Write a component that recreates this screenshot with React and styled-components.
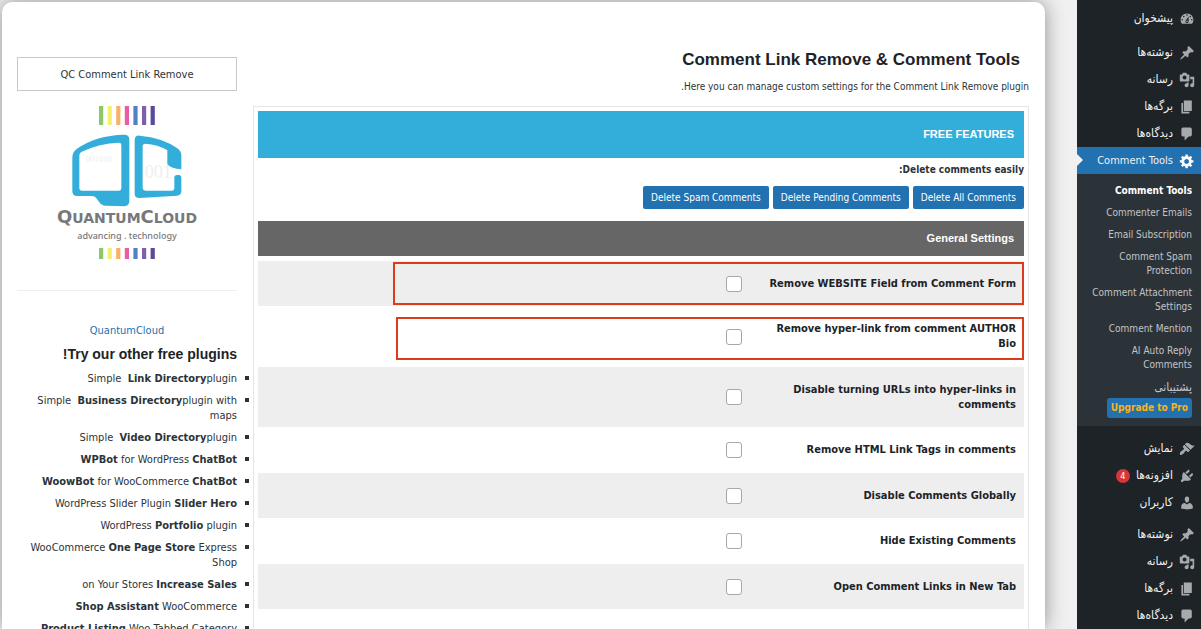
import React from "react";
import styled, { createGlobalStyle } from "styled-components";

const GlobalStyle = createGlobalStyle`
  * {
    box-sizing: border-box;
  }

  body {
    margin: 0;
    background: #f0f0f1;
    color: #2c3338;
    font-family: "DejaVu Sans Condensed", "Noto Sans", sans-serif;
    font-size: 11px;
    line-height: 15px;
  }
`;

const Page = styled.div`
  display: flex;
  height: 100vh;
  overflow: hidden;
`;

/* admin menu */

const Menu = styled.nav`
  flex: 0 0 124px;
  padding-top: 5px;
  background: #1d2327;
`;

const MenuList = styled.ul`
  list-style: none;
  margin: 0;
  padding: 0;
`;

const MenuItem = styled.li`
  margin-top: ${props => props.$gap || 0}px;
`;

const MenuLink = styled.a`
  position: relative;
  display: flex;
  align-items: center;
  gap: 6px;
  height: 27px;
  padding-right: 6px;
  background: ${props => (props.$current ? "#2271b1" : "transparent")};
  color: #f0f0f1;
  font-size: ${props => (props.$current ? 11 : 12)}px;
  text-decoration: none;
  white-space: nowrap;

  &::after {
    content: "";
    display: ${props => (props.$current ? "block" : "none")};
    position: absolute;
    left: 0;
    top: 7px;
    border: 6px solid transparent;
    border-left-color: #f0f0f1;
    border-right: 0;
  }
`;

const MenuIcon = styled.svg`
  flex: none;
  width: 16px;
  height: 16px;
  fill: ${props => (props.$current ? "#fff" : "#a7aaad")};
`;

const Count = styled.span`
  width: 14px;
  height: 14px;
  border-radius: 7px;
  background: #d63638;
  color: #fff;
  font-size: 9px;
  line-height: 14px;
  text-align: center;
`;

const SubMenu = styled.ul`
  list-style: none;
  margin: 0;
  padding: 6px 0 8px;
  background: #2c3338;
`;

const SubLink = styled.a`
  display: block;
  padding: 4px 9px 4px 14px;
  color: ${props => (props.$current ? "#fff" : "#c3c4c7")};
  font-weight: ${props => (props.$current ? "bold" : "normal")};
  font-size: 10px;
  line-height: 14px;
  text-decoration: none;

  &:lang(fa) {
    font-size: 12px;
  }
`;

const Upgrade = styled.a`
  display: block;
  width: fit-content;
  margin-right: 9px;
  padding: 3px 4px;
  border-radius: 3px;
  background: #2271b1;
  color: #fcb214;
  font-size: 10px;
  font-weight: bold;
  line-height: 14px;
  text-decoration: none;
  white-space: nowrap;
`;

/* content card */

const Card = styled.div`
  flex: 1;
  display: flex;
  align-items: flex-start;
  gap: 16px;
  min-width: 0;
  margin: 2px 32px 0 2px;
  padding: 46px 16px 40px 15px;
  border-radius: 10px 10px 0 0;
  background: #fff;
  box-shadow: 0 0 20px rgba(0, 0, 0, 0.4);
`;

const Main = styled.main`
  flex: 1;
  min-width: 0;
`;

const Title = styled.h1`
  margin: 0 9px 6px 0;
  color: #1d2327;
  font-family: "Liberation Sans", Arial, sans-serif;
  font-size: 17px;
  line-height: 24px;
`;

const Intro = styled.p`
  margin: 0 0 11px;
  font-size: 10px;
  line-height: 17px;
`;

const Settings = styled.section`
  padding: 4px;
  border: 1px solid #e5e5e5;
  min-height: 600px;
`;

const Banner = styled.h2`
  margin: 0;
  padding: 0 10px;
  background: ${props => (props.$dark ? "#666" : "#33aeda")};
  color: #fff;
  font-family: "Liberation Sans", Arial, sans-serif;
  font-size: 11px;
  line-height: ${props => (props.$dark ? 35 : 47)}px;
`;

const Label = styled.p`
  margin: 4px 0 8px;
  font-size: 10px;
  font-weight: bold;
  line-height: 16px;
`;

const Actions = styled.div`
  display: flex;
  gap: 4px;
  margin-bottom: 12px;
`;

const Button = styled.button`
  height: 23px;
  padding: 0 8px;
  border: 0;
  border-radius: 2px;
  background: #2271b1;
  color: #fff;
  font-family: inherit;
  font-size: 10px;
`;

const Table = styled.table`
  width: 100%;
  margin-top: 5px;
  border-collapse: collapse;
`;

const Head = styled.th`
  width: 272px;
  padding: 15px 8px 15px 10px;
  color: #1d2327;
  text-align: right;
`;

const Row = styled.tr`
  position: relative;
  background: #fff;

  &:nth-child(odd) {
    background: #eee;
  }

  &:nth-child(even) ${Head} {
    padding-bottom: 16px;
  }

  &::after {
    content: "";
    display: ${props => (props.$marked ? "block" : "none")};
    position: absolute;
    top: ${props => (props.$marked === "inner" ? 11 : 1)}px;
    right: 0;
    bottom: ${props => (props.$marked === "inner" ? 7 : 1)}px;
    left: ${props => (props.$marked === "inner" ? 138 : 135)}px;
    border: 2px solid #dd3c1c;
    pointer-events: none;
  }
`;

const Cell = styled.td`
  padding: 0 10px;
`;

const Checkbox = styled.input.attrs({ type: "checkbox" })`
  appearance: none;
  display: block;
  width: 16px;
  height: 16px;
  margin: 0;
  border: 1px solid #a5a7aa;
  border-radius: 3px;
  background: #fff;
`;

/* promo column */

const Aside = styled.aside`
  flex: 0 0 220px;
  padding-top: 9px;
`;

const PluginName = styled.div`
  height: 34px;
  border: 1px solid #c8c9cc;
  line-height: 34px;
  text-align: center;
`;

const Brand = styled.div`
  display: flex;
  flex-direction: column;
  align-items: center;
  height: 200px;
  padding-top: 15px;
  border-bottom: 1px solid #eee;
`;

const BrandName = styled.div`
  color: #77787b;
  font-family: "DejaVu Sans", sans-serif;
  font-size: 14px;
  font-weight: bold;
  line-height: 20px;
  white-space: nowrap;

  span {
    font-size: 18px;
  }
`;

const Slogan = styled.div`
  margin-bottom: 4px;
  color: #77787b;
  font-family: "Noto Sans", sans-serif;
  font-size: 9px;
  font-weight: 500;
  line-height: 16px;
`;

const BrandLink = styled.a`
  display: block;
  margin: 32px 0 7px;
  color: #2271b1;
  line-height: 16px;
  text-align: center;
  text-decoration: none;
`;

const Subtitle = styled.h3`
  margin: 0 0 9px;
  color: #1d2327;
  font-family: "Liberation Sans", Arial, sans-serif;
  font-size: 14px;
  line-height: 16px;
`;

const PluginList = styled.ul`
  margin: 0;
  padding: 0;
  list-style: none;
`;

const Plugin = styled.li`
  position: relative;
  margin-bottom: 7px;

  &::before {
    content: "";
    position: absolute;
    top: 5px;
    right: -12px;
    width: 4px;
    height: 4px;
    background: #2c3338;
  }
`;

const icons = {
  dashboard:
    "M3.76 16h12.48c1.1-1.37 1.76-3.11 1.76-5 0-4.42-3.58-8-8-8s-8 3.58-8 8c0 1.89.66 3.63 1.76 5zM10 4c.55 0 1 .45 1 1s-.45 1-1 1-1-.45-1-1 .45-1 1-1zM6 6c.55 0 1 .45 1 1s-.45 1-1 1-1-.45-1-1 .45-1 1-1zm8 0c.55 0 1 .45 1 1s-.45 1-1 1-1-.45-1-1 .45-1 1-1zm-5.37 5.55L12 7v6c0 1.1-.9 2-2 2s-2-.9-2-2c0-.57.24-1.08.63-1.45zM4 10c.55 0 1 .45 1 1s-.45 1-1 1-1-.45-1-1 .45-1 1-1zm12 0c.55 0 1 .45 1 1s-.45 1-1 1-1-.45-1-1 .45-1 1-1zm-5 3c0-.55-.45-1-1-1s-1 .45-1 1 .45 1 1 1 1-.45 1-1z",
  post:
    "M10.44 3.02l1.82-1.82 6.36 6.35-1.83 1.82c-1.05-.68-2.48-.57-3.41.36l-.75.75c-.92.93-1.04 2.35-.35 3.41l-1.83 1.82-2.41-2.41-2.8 2.79c-.42.42-3.38 2.71-3.8 2.29s1.86-3.39 2.28-3.81l2.79-2.79L4.1 9.36l1.83-1.82c1.05.69 2.48.57 3.4-.36l.75-.75c.93-.92 1.05-2.35.36-3.41z",
  media:
    "M13 11V4c0-.55-.45-1-1-1h-1.67L9 1H5L3.67 3H2c-.55 0-1 .45-1 1v7c0 .55.45 1 1 1h10c.55 0 1-.45 1-1zM7 4.5c1.38 0 2.5 1.12 2.5 2.5S8.38 9.5 7 9.5 4.5 8.38 4.5 7 5.62 4.5 7 4.5zM14 6h5v10.5c0 1.38-1.12 2.5-2.5 2.5S14 17.88 14 16.5s1.12-2.5 2.5-2.5c.17 0 .34.02.5.05V9h-3V6zm-4 8.05V13h2v3.5c0 1.38-1.12 2.5-2.5 2.5S7 17.88 7 16.5 8.12 14 9.5 14c.17 0 .34.02.5.05z",
  page: "M6 15V2h10v13H6zm-1 1h8v2H3V5h2v11z",
  comments:
    "M5 2h9c1.1 0 2 .9 2 2v7c0 1.1-.9 2-2 2h-2l-5 5v-5H5c-1.1 0-2-.9-2-2V4c0-1.1.9-2 2-2z",
  generic:
    "M18 12h-2.18c-.17.7-.44 1.35-.81 1.93l1.54 1.54-2.1 2.1-1.54-1.54c-.58.36-1.23.63-1.91.79V19H8v-2.18c-.68-.16-1.33-.43-1.91-.79l-1.54 1.54-2.12-2.12 1.54-1.54c-.36-.58-.63-1.23-.79-1.91H1V9.03h2.17c.16-.7.44-1.35.8-1.94L2.43 5.55l2.1-2.1 1.54 1.54c.58-.37 1.24-.64 1.93-.81V2h3v2.18c.68.16 1.33.43 1.91.79l1.54-1.54 2.12 2.12-1.54 1.54c.36.59.64 1.24.8 1.94H18V12zm-8.5 1.5c1.66 0 3-1.34 3-3s-1.34-3-3-3-3 1.34-3 3 1.34 3 3 3z",
  appearance:
    "M14.48 11.06L7.41 3.99l1.5-1.5c.5-.56 2.3-.47 3.51.32 1.21.8 1.43 1.28 2.91 2.1 1.18.64 2.45 1.26 4.45.85zm-.71.71L6.7 4.7 4.93 6.47c-.39.39-.39 1.02 0 1.41l1.06 1.06c.39.39.39 1.03 0 1.42-.6.6-1.43 1.11-2.21 1.69-.35.26-.7.53-1.01.84C1.43 14.23.4 16.08 1.4 17.07c.99 1 2.84-.03 4.18-1.36.31-.31.58-.66.85-1.02.57-.78 1.08-1.61 1.69-2.21.39-.39 1.02-.39 1.41 0l1.06 1.06c.39.39 1.02.39 1.41 0z",
  plugins:
    "M13.11 4.36L9.87 7.6 8 5.73l3.24-3.24c.35-.34 1.05-.2 1.56.32.52.51.66 1.21.31 1.55zm-8 1.77l.91-1.12 9.01 9.01-1.19.84c-.71.71-2.63 1.16-3.82 1.16H6.14L4.9 17.26c-.59.59-1.54.59-2.12 0-.59-.58-.59-1.53 0-2.12l1.24-1.24v-3.88c0-1.13.4-3.19 1.09-3.89zm7.26 3.97l3.24-3.24c.34-.35 1.04-.21 1.55.31.52.51.66 1.21.31 1.55l-3.24 3.25z",
  users:
    "M10 9.25c-2.27 0-2.73-3.44-2.73-3.44C7 4.02 7.82 2 9.97 2c2.16 0 2.98 2.02 2.71 3.81 0 0-.41 3.44-2.68 3.44zm0 2.57L12.72 10c2.39 0 4.52 2.33 4.52 4.53v2.49s-3.65 1.13-7.24 1.13c-3.65 0-7.24-1.13-7.24-1.13v-2.49c0-2.25 1.94-4.48 4.47-4.48z"
};

const submenu = [
  { text: "Commenter Emails" },
  { text: "Email Subscription" },
  { text: "Comment Spam Protection" },
  { text: "Comment Attachment Settings" },
  { text: "Comment Mention" },
  { text: "AI Auto Reply Comments" },
  { text: "پشتیبانی", lang: "fa" }
];

const menu = [
  { icon: "dashboard", text: "پیشخوان" },
  { icon: "post", text: "نوشته‌ها", gap: 7 },
  { icon: "media", text: "رسانه" },
  { icon: "page", text: "برگه‌ها" },
  { icon: "comments", text: "دیدگاه‌ها" },
  { icon: "generic", text: "Comment Tools", current: true, open: true },
  { icon: "appearance", text: "نمایش", gap: 9 },
  { icon: "plugins", text: "افزونه‌ها", count: 4 },
  { icon: "users", text: "کاربران" },
  { icon: "post", text: "نوشته‌ها", gap: 5 },
  { icon: "media", text: "رسانه" },
  { icon: "page", text: "برگه‌ها" },
  { icon: "comments", text: "دیدگاه‌ها" },
  { icon: "generic", text: "", current: true }
];

const options = [
  { text: "Remove WEBSITE Field from Comment Form", marked: "full" },
  { text: "Remove hyper-link from comment AUTHOR Bio", marked: "inner" },
  { text: "Disable turning URLs into hyper-links in comments" },
  { text: "Remove HTML Link Tags in comments" },
  { text: "Disable Comments Globally" },
  { text: "Hide Existing Comments" },
  { text: "Open Comment Links in New Tab" }
];

const barColors = [
  "#8cc768",
  "#f4f06d",
  "#f7b26a",
  "#ec5aa0",
  "#4f81c4",
  "#7d5fae",
  "#5a4a9c"
];

const Bars = ({ height }) => (
  <svg width="56" height={height} aria-hidden="true">
    {barColors.map((color, i) => (
      <rect
        key={color}
        x={i * 8.6}
        width="4.2"
        height={height}
        fill={color}
      />
    ))}
  </svg>
);

const LogoMark = styled.svg`
  flex: none;
  width: 110px;
  height: 73px;
  margin-top: 9px;
`;

const Logo = () => (
  <LogoMark viewBox="217 281 330 219" role="img" aria-label="QC">
    <g fill="#eceff1" fontFamily="Liberation Serif" direction="ltr">
      <text x="258" y="366" fontSize="26">
        001010
      </text>
      <text x="435" y="412" fontSize="54">
        001
      </text>
    </g>
    <g fill="#33aeda" fillRule="evenodd">
      <path d="M218 352Q218 335 232 325Q290 285 372 283Q389 282 389 298L389 482Q389 497 374 498L318 496Q305 495 298 484L290 474Q286 467 276 467L232 467Q218 467 218 453ZM239 345Q239 338 246 334Q300 309 358 307Q365 307 365 314L365 444Q365 451 358 451L246 451Q239 451 239 444Z" />
      <path d="M405 300Q405 284 420 286Q490 292 535 325Q545 333 545 345L545 387Q515 385 503 372L503 330Q475 312 437 310Q429 310 429 318L429 443Q429 450 437 451L517 451Q524 451 524 444L524 412Q524 404 532 404L537 404Q545 404 545 412L545 453Q545 464 533 466L420 473Q405 473 405 460Z" />
    </g>
  </LogoMark>
);

const AdminMenu = () => (
  <Menu>
    <MenuList>
      {menu.map((item, i) => (
        <MenuItem key={i} $gap={item.gap}>
          <MenuLink href="#" $current={item.current}>
            <MenuIcon viewBox="0 0 20 20" $current={item.current}>
              <path d={icons[item.icon]} />
            </MenuIcon>
            {item.text}
            {item.count && <Count>{item.count}</Count>}
          </MenuLink>
          {item.open && (
            <SubMenu>
              <li>
                <SubLink href="#" $current>
                  Comment Tools
                </SubLink>
              </li>
              {submenu.map(({ text, lang }) => (
                <li key={text}>
                  <SubLink href="#" lang={lang}>
                    {text}
                  </SubLink>
                </li>
              ))}
              <li>
                <Upgrade href="#">Upgrade to Pro</Upgrade>
              </li>
            </SubMenu>
          )}
        </MenuItem>
      ))}
    </MenuList>
  </Menu>
);

const Option = ({ id, text, marked }) => (
  <Row $marked={marked}>
    <Head scope="row">
      <label htmlFor={id}>{text}</label>
    </Head>
    <Cell>
      <Checkbox id={id} />
    </Cell>
  </Row>
);

const Promo = () => (
  <Aside>
    <PluginName>QC Comment Link Remove</PluginName>
    <Brand>
      <Bars height={19} />
      <Logo />
      <BrandName>
        <span>Q</span>UANTUM<span>C</span>LOUD
      </BrandName>
      <Slogan>advancing . technology</Slogan>
      <Bars height={11} />
    </Brand>
    <BrandLink href="#">QuantumCloud</BrandLink>
    <Subtitle>Try our other free plugins!</Subtitle>
    <PluginList>
      <Plugin>
        Simple &nbsp;<b>Link Directory</b>plugin
      </Plugin>
      <Plugin>
        Simple &nbsp;<b>Business Directory</b>plugin with maps
      </Plugin>
      <Plugin>
        Simple &nbsp;<b>Video Directory</b>plugin
      </Plugin>
      <Plugin>
        <b>WPBot</b> for WordPress <b>ChatBot</b>
      </Plugin>
      <Plugin>
        <b>WoowBot</b> for WooCommerce <b>ChatBot</b>
      </Plugin>
      <Plugin>
        WordPress Slider Plugin <b>Slider Hero</b>
      </Plugin>
      <Plugin>
        WordPress <b>Portfolio</b> plugin
      </Plugin>
      <Plugin>
        WooCommerce <b>One Page Store</b> Express Shop
      </Plugin>
      <Plugin>
        on Your Stores <b>Increase Sales</b>
      </Plugin>
      <Plugin>
        <b>Shop Assistant</b> WooCommerce
      </Plugin>
      <Plugin>
        <b>Product Listing</b> Woo Tabbed Category
      </Plugin>
    </PluginList>
  </Aside>
);

export default () => {
  return (
    <Page dir="rtl">
      <GlobalStyle />
      <AdminMenu />
      <Card>
        <Main>
          <Title>Comment Link Remove &amp; Comment Tools</Title>
          <Intro>
            Here you can manage custom settings for the Comment Link Remove
            plugin.
          </Intro>
          <Settings>
            <Banner>FREE FEATURES</Banner>
            <Label>Delete comments easily:</Label>
            <Actions>
              <Button>Delete All Comments</Button>
              <Button>Delete Pending Comments</Button>
              <Button>Delete Spam Comments</Button>
            </Actions>
            <Banner $dark>General Settings</Banner>
            <Table>
              <tbody>
                {options.map((option, i) => (
                  <Option key={option.text} id={`option-${i}`} {...option} />
                ))}
              </tbody>
            </Table>
          </Settings>
        </Main>
        <Promo />
      </Card>
    </Page>
  );
};
